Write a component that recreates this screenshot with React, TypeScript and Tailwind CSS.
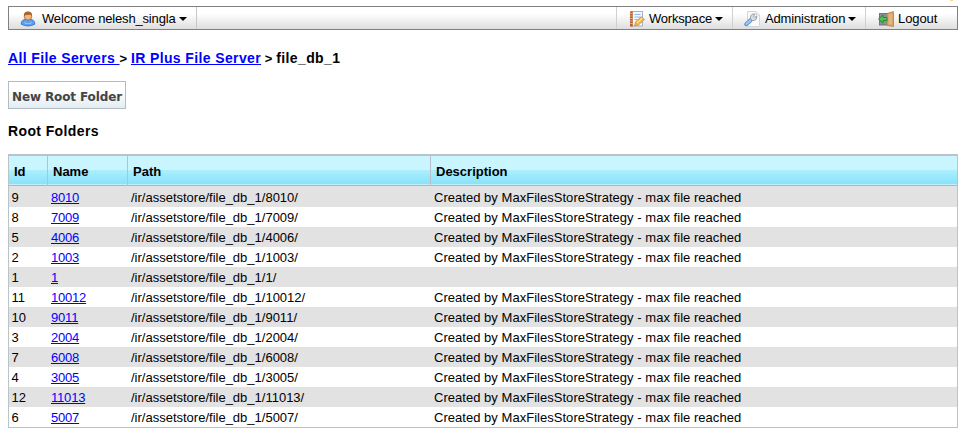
import React from "react";

const rows: [number, string][] = [
  [9, "8010"],
  [8, "7009"],
  [5, "4006"],
  [2, "1003"],
  [1, "1"],
  [11, "10012"],
  [10, "9011"],
  [3, "2004"],
  [7, "6008"],
  [4, "3005"],
  [12, "11013"],
  [6, "5007"],
];

function UserIcon() {
  return (
    <svg width="16" height="16" viewBox="0 0 16 16" className="shrink-0">
      <path d="M1.2 13.2 C1 10.3 3 8.5 5.5 8.5 H10.5 C13 8.5 15 10.3 14.8 13.2 Q8 16.8 1.2 13.2Z" fill="#5a9ff0" stroke="#3872c4" strokeWidth=".9" />
      <path d="M4 10.5 Q8 14 12 10.5 L11 13 H5Z" fill="#8ac2ff" />
      <circle cx="8" cy="5.4" r="3.7" fill="#f1b77d" stroke="#a76028" strokeWidth=".8" />
      <path d="M4 5.3 C3.5 1.5 5.8 .5 8 .5 C10.8 .5 12.5 2 12 5.3 L10.7 3.8 L5.8 4Z" fill="#a9642e" />
    </svg>
  );
}

function NotebookIcon() {
  return (
    <svg width="16" height="16" viewBox="0 0 16 16" className="shrink-0">
      <rect x="2.5" y=".5" width="11" height="14.5" fill="#f5f9ff" stroke="#9aabc2" strokeWidth=".9" />
      <rect x="1" y=".5" width="2.8" height="15" fill="#b86230" />
      <path d="M.5 2.5h3M.5 5h3M.5 7.5h3M.5 10h3M.5 12.5h3" stroke="#e5c8aa" strokeWidth=".7" />
      <path d="M5.5 3.5h6M5.5 6h6M5.5 8.5h3" stroke="#8eb9ee" />
      <path d="M5.5 14.8 L6.7 10.8 L12.2 5.7 L15.4 8.5 L9.5 14Z" fill="#f7b544" stroke="#c98a36" strokeWidth=".8" />
      <path d="M8 12 L13.3 7.2" stroke="#ffe29a" strokeWidth="1.2" />
    </svg>
  );
}

function WrenchIcon() {
  return (
    <svg width="16" height="16" viewBox="0 0 16 16" className="shrink-0">
      <path d="M3.5 .5H12L15.5 4V15.5H3.5Z" fill="#fafafa" stroke="#d2d6dc" />
      <path d="M12 .5V4H15.5" fill="#e9ecef" stroke="#d2d6dc" />
      <path d="M2.3 13.2 L6.5 9.2" stroke="#5b8fcb" strokeWidth="4" strokeLinecap="round" />
      <path d="M2.5 12.9 L6.5 9.2" stroke="#9cc8f6" strokeWidth="2.2" strokeLinecap="round" />
      <path d="M6.6 8.2 Q5.7 3.6 9.3 2.9 L11 3.2 L9.5 5.1 L10.7 6.4 L12.7 5 Q13.3 9.6 8.6 9.6Z" fill="#d7dde4" stroke="#8a98a5" strokeWidth=".9" />
    </svg>
  );
}

function LogoutIcon() {
  return (
    <svg width="16" height="16" viewBox="0 0 16 16" className="shrink-0">
      <path d="M1 2H10V14.5H1Z" fill="#6f7478" />
      <path d="M2 3H9V13.5H2Z" fill="#8a9197" />
      <path d="M9 2.5 L15.5 .5 V15.5 L9 14.5Z" fill="#d9a468" stroke="#b27d48" strokeWidth=".8" />
      <path d="M10.7 3.8 L14 3V13.6L10.7 13Z" fill="#e4b57e" />
      <path d="M.5 8 L5 4 V6.5H9V9.5H5V12Z" fill="#50c350" stroke="#238536" strokeWidth=".9" />
    </svg>
  );
}

function Caret() {
  return (
    <svg width="8" height="4" viewBox="0 0 8 4" className="ml-[3px] shrink-0">
      <path d="M0 0H8L4 4Z" fill="#000" />
    </svg>
  );
}

const cell = "flex h-full items-center pt-px";

export default function App() {
  return (
    <div className="h-[428px] w-[966px] overflow-hidden bg-white font-['Liberation_Sans',Arial,sans-serif] text-[13px] leading-5 text-black">
      <div className="flex h-1.5 items-start">
        <div className="ml-[950px] h-px w-[3px] bg-[#ffd491]" />
      </div>
      <nav className="ml-2 flex h-6 w-[950px] border border-[#808080] bg-linear-to-b from-white from-30% to-[#dedede]">
        <div className="flex h-full w-[188px] items-center border-r border-[#c8c8c8] pl-[11px] pt-px">
          <UserIcon />
          <span className="ml-[6px] tracking-[-0.17px]">Welcome nelesh_singla</span>
          <Caret />
        </div>
        <div className="ml-auto flex h-full w-[116px] items-center border-l border-[#d0d0d0] pl-3 pt-px">
          <NotebookIcon />
          <span className="ml-1 tracking-[-0.2px]">Workspace</span>
          <Caret />
        </div>
        <div className="flex h-full w-[133px] items-center border-l border-[#d0d0d0] pl-[11px] pt-px">
          <WrenchIcon />
          <span className="ml-[5px] tracking-[-0.15px]">Administration</span>
          <Caret />
        </div>
        <div className="flex h-full w-[92px] items-center border-l border-[#d0d0d0] pl-3 pt-px">
          <LogoutIcon />
          <span className="ml-1 tracking-[-0.1px]">Logout</span>
        </div>
      </nav>
      <div className="ml-2 mt-[18px] h-5 whitespace-pre text-sm font-bold leading-5 tracking-[0.38px]">
        <a className="text-[#0000ff] underline">All File Servers </a>
        <span className="text-[13px] tracking-[0.1px]">&gt; </span>
        <a className="text-[#0000ff] underline">IR Plus File Server</a>
        <span className="text-[13px] tracking-[0.1px]"> &gt; </span>
        <span>file_db_1</span>
      </div>
      <button className="ml-2 mt-[13px] flex h-7 w-[118px] items-center whitespace-nowrap border border-[#b2bcc2] bg-linear-to-b from-white from-30% to-[#e2edf2] pl-[3px] pt-[3px] font-['DejaVu_Sans',Verdana,sans-serif] text-xs font-bold tracking-[-0.12px] text-[#444444]">
        New Root Folder
      </button>
      <h2 className="ml-2 mt-3 h-5 text-sm font-bold leading-5 tracking-[0.38px]">Root Folders</h2>
      <div className="ml-2 mt-[13px] h-[274px] w-[950px] border border-t-2 border-[#b8c4c8]">
        <div className="grid h-[31px] grid-cols-[39px_80px_303px_1fr] border-b border-[#e2e2e2] bg-[linear-gradient(to_bottom,#cbf6ff_0,#c9f5fe_14px,#aeeefd_14px,#86e3fa_28px,#c4eefa_28px,#c4eefa_29px,#aab7bd_29px,#aab7bd_30px)] font-bold">
          <div className={`${cell} border-r border-[#b8c0cc] pl-[5px]`}>Id</div>
          <div className={`${cell} border-r border-[#b8c0cc] pl-[5px]`}>Name</div>
          <div className={`${cell} border-r border-[#b8c0cc] pl-[5px]`}>Path</div>
          <div className={`${cell} pl-[5px]`}>Description</div>
        </div>
        {rows.map(([id, name], i) => (
          <div key={id} className={`grid h-5 grid-cols-[39px_80px_303px_1fr] ${i % 2 ? "bg-white" : "bg-[#e2e2e2]"}`}>
            <div className={`${cell} pl-[2.5px]`}>{id}</div>
            <div className={`${cell} pl-[3px]`}>
              <a className="tracking-[-0.2px] text-[#0000ff] underline">{name}</a>
            </div>
            <div className={`${cell} pl-[3px]`}>/ir/assetstore/file_db_1/{name}/</div>
            <div className={`${cell} pl-[3px] tracking-[0.03px]`}>
              {name === "1" ? "" : "Created by MaxFilesStoreStrategy - max file reached"}
            </div>
          </div>
        ))}
      </div>
    </div>
  );
}
